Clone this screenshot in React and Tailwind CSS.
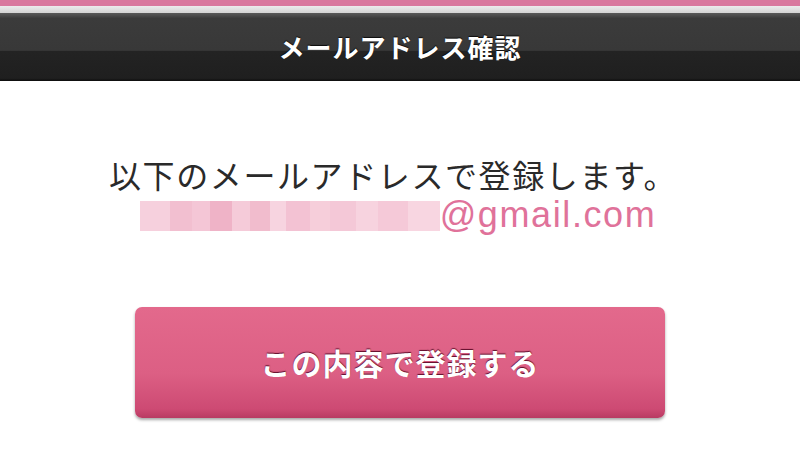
import React from "react";

const mosaic = [
  { w: 30, c: "bg-[#f6d0dd]" },
  { w: 22, c: "bg-[#f2bfd0]" },
  { w: 18, c: "bg-[#f4c6d6]" },
  { w: 22, c: "bg-[#efb3c7]" },
  { w: 18, c: "bg-[#f5cbd9]" },
  { w: 20, c: "bg-[#f1bccd]" },
  { w: 16, c: "bg-[#f7d4e0]" },
  { w: 24, c: "bg-[#f3c2d3]" },
  { w: 20, c: "bg-[#f6ceda]" },
  { w: 26, c: "bg-[#f4c8d7]" },
  { w: 22, c: "bg-[#f7d3df]" },
  { w: 30, c: "bg-[#f5c9d8]" },
  { w: 32, c: "bg-[#f8d6e1]" },
];

export default function App() {
  return (
    <div className="w-[800px] h-[450px] bg-white overflow-hidden flex flex-col font-['Noto_Sans_CJK_JP','Noto_Sans',sans-serif]">
      <div className="h-[6px] bg-[#d9789e]" />
      <div className="h-[7px] bg-[linear-gradient(#ececec,#d4d4d4)]" />
      <div className="h-[68px] bg-[linear-gradient(#5a5a5a_0%,#3b3b3b_8%,#383838_55%,#232323_56%,#1f1f1f_96%,#0c0c0c_100%)] flex items-center justify-center">
        <span className="text-white text-[26px] font-bold tracking-[1px] [text-shadow:0_-1px_1px_rgba(0,0,0,0.8)] leading-none">
          メールアドレス確認
        </span>
      </div>
      <div className="flex flex-col items-center pt-[73px]">
        <div className="text-[#2a2a2a] text-[32px] leading-[40px] tracking-[1.6px] pr-[14px]">
          以下のメールアドレスで登録します。
        </div>
        <div className="flex items-center h-[42px] pr-[4px]">
          <div className="flex h-[30px] w-[300px] mt-[2px]">
            {mosaic.map((m, i) => (
              <div key={i} className={`${m.c} h-full`} style={{ width: m.w }} />
            ))}
          </div>
          <span className="text-[#e0729a] text-[36px] leading-none font-['Liberation_Sans',sans-serif] tracking-[1.6px]">
            @gmail.com
          </span>
        </div>
        <button className="mt-[71px] w-[530px] h-[111px] rounded-[7px] bg-[linear-gradient(#e3698c_0%,#dc5f84_60%,#cd4a73_92%,#b83a62_100%)] shadow-[0_2px_3px_rgba(0,0,0,0.35)] flex items-center justify-center">
          <span className="text-white text-[30px] font-bold tracking-[1px] [text-shadow:0_-1px_1px_rgba(80,0,30,0.9)]">
            この内容で登録する
          </span>
        </button>
      </div>
    </div>
  );
}
